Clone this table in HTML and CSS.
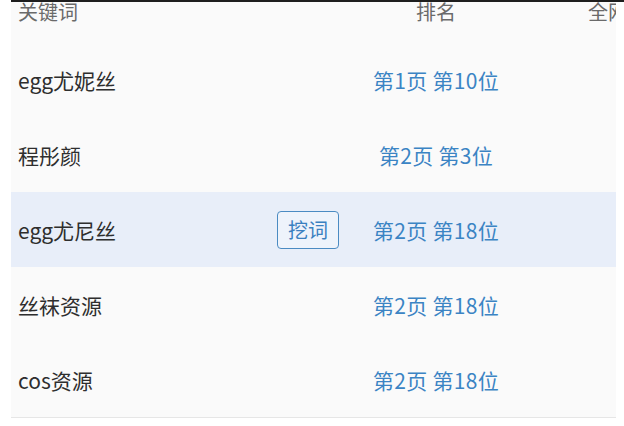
FILE: index.html
```html
<!DOCTYPE html>
<html lang="zh-CN">
<head>
<meta charset="utf-8">
<link rel="stylesheet" href="styles.css">
</head>
<body>
<div class="topline"></div>
<div class="table">
  <div class="row head">
    <div class="c-key">关键词</div>
    <div class="c-act"></div>
    <div class="c-rank">排名</div>
    <div class="c-more">全网排名</div>
  </div>
  <div class="row">
    <div class="c-key">egg尤妮丝</div>
    <div class="c-act"></div>
    <div class="c-rank rank">第1页 第10位</div>
    <div class="c-more"></div>
  </div>
  <div class="row">
    <div class="c-key">程彤颜</div>
    <div class="c-act"></div>
    <div class="c-rank rank">第2页 第3位</div>
    <div class="c-more"></div>
  </div>
  <div class="row active">
    <div class="c-key">egg尤尼丝</div>
    <div class="c-act"><span class="btn">挖词</span></div>
    <div class="c-rank rank">第2页 第18位</div>
    <div class="c-more"></div>
  </div>
  <div class="row">
    <div class="c-key">丝袜资源</div>
    <div class="c-act"></div>
    <div class="c-rank rank">第2页 第18位</div>
    <div class="c-more"></div>
  </div>
  <div class="row last">
    <div class="c-key">cos资源</div>
    <div class="c-act"></div>
    <div class="c-rank rank">第2页 第18位</div>
    <div class="c-more"></div>
  </div>
</div>
</body>
</html>
```
FILE: styles.css
```css
html, body {
  margin: 0;
  padding: 0;
  background: #ffffff;
  font-family: "Noto Sans CJK SC", "Noto Sans", sans-serif;
}
.topline {
  margin-left: 11px;
  height: 2px;
  background: #1e1e1e;
}
.table {
  width: 605px;
  margin-left: 11px;
  overflow: hidden;
  background: #fafafa;
}
.row {
  display: grid;
  grid-template-columns: 259px 62px 194px 1fr;
  align-items: center;
  height: 75px;
  padding-left: 7px;
  white-space: nowrap;
  font-size: 21px;
  color: #2e2e2e;
}
.row.head {
  height: 40px;
  align-items: start;
  color: #6a6a6a;
  font-size: 20px;
  line-height: 22px;
  margin-top: -1px;
  padding-bottom: 1px;
}
.row.active {
  background: #e8eef9;
}
.row.last {
  border-bottom: 1px solid #e6e6e6;
}
.c-rank {
  text-align: center;
}
.c-more {
  padding-left: 55px;
}
.rank {
  color: #3b84c4;
  font-size: 21px;
  letter-spacing: 0.3px;
}
.btn {
  display: flex;
  align-items: center;
  justify-content: center;
  width: 60px;
  height: 36px;
  border: 1px solid #4b8bc2;
  border-radius: 4px;
  color: #3a80c0;
  font-size: 20px;
  background: #eef3fb;
}
```
